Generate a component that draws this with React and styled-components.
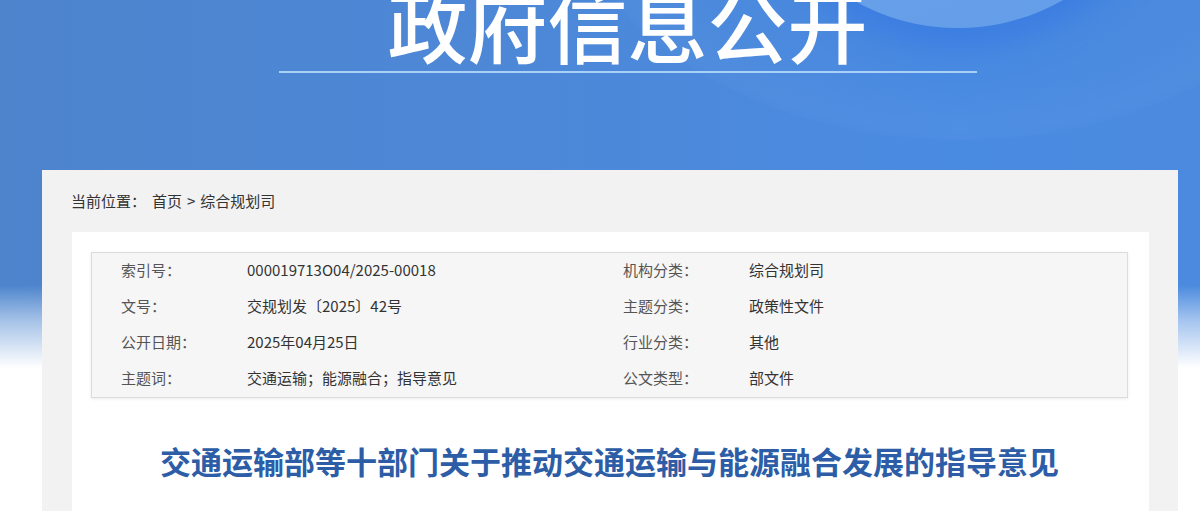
import React from 'react'
import styled, { createGlobalStyle } from 'styled-components'

const GlobalStyle = createGlobalStyle`
    html, body {
        margin: 0;
        padding: 0;
        background: #fff;
    }
    body {
        font-family: "Noto Sans CJK SC", "Noto Sans", "Liberation Sans", sans-serif;
        color: #333;
    }
`

const infoRows = [
    { label: '索引号：', value: '000019713O04/2025-00018', label2: '机构分类：', value2: '综合规划司' },
    { label: '文号：', value: '交规划发〔2025〕42号', label2: '主题分类：', value2: '政策性文件' },
    { label: '公开日期：', value: '2025年04月25日', label2: '行业分类：', value2: '其他' },
    { label: '主题词：', value: '交通运输；能源融合；指导意见', label2: '公文类型：', value2: '部文件' },
]

function App() {
    return (
        <Page>
            <GlobalStyle />
            <Halo />
            <Moon />
            <Banner>
                <BannerTitle>政府信息公开</BannerTitle>
                <BannerLine />
            </Banner>
            <Card>
                <Crumbs>
                    <CrumbLabel>当前位置：</CrumbLabel>
                    <CrumbLink>首页</CrumbLink>
                    <span>&gt;</span>
                    <CrumbLink>综合规划司</CrumbLink>
                </Crumbs>
                <Panel>
                    <InfoBox>
                        {infoRows.map((r) => (
                            <React.Fragment key={r.label}>
                                <Label>{r.label}</Label>
                                <Value>{r.value}</Value>
                                <Label>{r.label2}</Label>
                                <Value>{r.value2}</Value>
                            </React.Fragment>
                        ))}
                    </InfoBox>
                    <DocTitle>交通运输部等十部门关于推动交通运输与能源融合发展的指导意见</DocTitle>
                </Panel>
            </Card>
        </Page>
    )
}

const Page = styled.div`
    position: relative;
    overflow: hidden;
    min-height: 511px;
    background:
        linear-gradient(to bottom, rgba(255,255,255,0) 0, rgba(255,255,255,0) 285px, rgba(235,243,253,.55) 320px, #fff 368px),
        linear-gradient(90deg, #4d84cc 0%, #4d88d8 45%, #4a8be2 80%, #4b8ade 100%);
`

const Halo = styled.div`
    position: absolute;
    left: 560px;
    top: -420px;
    width: 800px;
    height: 560px;
    border-radius: 50%;
    background: radial-gradient(ellipse at center, rgba(120,170,235,0) 58%, rgba(130,180,240,.08) 68%, rgba(120,170,235,0) 74%);
    pointer-events: none;
`

const Moon = styled.div`
    position: absolute;
    left: 747px;
    top: -394px;
    width: 422px;
    height: 422px;
    border-radius: 50%;
    background: linear-gradient(160deg, #78adf0 0%, #6aa2ea 60%, #639ce8 100%);
    box-shadow: 0 6px 30px 14px rgba(50, 115, 225, .55);
    pointer-events: none;
`

const Banner = styled.header`
    position: relative;
    height: 170px;
    display: flex;
    flex-direction: column;
    align-items: center;
    padding-left: 55px;
    box-sizing: border-box;
`

const BannerTitle = styled.h1`
    margin: -18px 0 0;
    font-size: 80px;
    line-height: 80px;
    font-weight: 500;
    color: #fff;
    letter-spacing: 0;
`

const BannerLine = styled.div`
    width: 698px;
    height: 2px;
    margin-top: 9px;
    background: #a9d1f7;
`

const Card = styled.section`
    position: relative;
    margin-left: 42px;
    width: 1136px;
    min-height: 341px;
    background: #f2f2f2;
`

const Crumbs = styled.nav`
    height: 62px;
    display: flex;
    align-items: center;
    gap: 5px;
    padding-left: 29px;
    padding-bottom: 2px;
    box-sizing: border-box;
    font-size: 15px;
    color: #333;
`

const CrumbLabel = styled.span`
    margin-right: 1px;
`

const CrumbLink = styled.a`
    color: #333;
    text-decoration: none;
`

const Panel = styled.div`
    margin: 0 29px 0 30px;
    min-height: 279px;
    background: #fff;
    padding: 20px 21px 0 19px;
`

const InfoBox = styled.div`
    display: grid;
    grid-template-columns: 126px 376px 126px 1fr;
    grid-auto-rows: 36px;
    align-items: center;
    padding-left: 29px;
    background: #f6f6f6;
    border: 1px solid #dcdcdc;
    box-shadow: 0 1px 3px rgba(0, 0, 0, .08);
    font-size: 15px;
`

const Label = styled.div`
    color: #555;
    padding-bottom: 4px;
`

const Value = styled.div`
    color: #333;
    padding-bottom: 4px;
`

const DocTitle = styled.h2`
    margin: 43px 0 0;
    text-align: center;
    font-size: 31px;
    line-height: 40px;
    font-weight: 700;
    color: #2c5da6;
    letter-spacing: 0;
`

export default App
